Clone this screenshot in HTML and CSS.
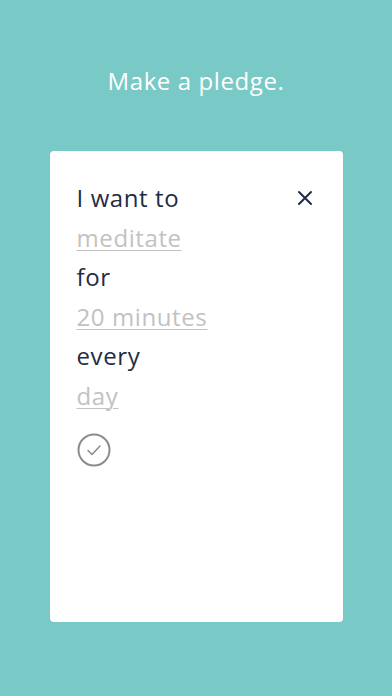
FILE: index.html
```html
<!DOCTYPE html>
<html lang="en">
<head>
    <meta charset="UTF-8">
    <meta name="viewport" content="width=device-width, initial-scale=1.0">
    <title>Make a pledge</title>
    <link rel="stylesheet" href="styles.css">
</head>
<body>
    <h1 class="title">Make a pledge.</h1>
    <div class="card">
        <div class="row">
            <span class="word">I want to</span>
            <button class="close" aria-label="Close">
                <svg width="16" height="16" viewBox="0 0 16 16"><path d="M2 2L14 14M14 2L2 14" stroke="#1f2d44" stroke-width="2" stroke-linecap="round"/></svg>
            </button>
        </div>
        <a class="pick">meditate</a>
        <span class="word">for</span>
        <a class="pick">20 minutes</a>
        <span class="word">every</span>
        <a class="pick">day</a>
        <button class="check" aria-label="Confirm">
            <svg width="34" height="34" viewBox="0 0 34 34"><circle cx="17" cy="17" r="15.5" fill="none" stroke="#8c8c8c" stroke-width="2"/><path d="M11 17.5L15 21.5L23 13" fill="none" stroke="#8c8c8c" stroke-width="1.6" stroke-linecap="round" stroke-linejoin="round"/></svg>
        </button>
    </div>
</body>
</html>
```

FILE: styles.css
```css
body {
    margin: 0;
    height: 696px;
    background-color: #79c9c7;
    font-family: "Open Sans", sans-serif;
    display: flex;
    flex-direction: column;
    align-items: center;
}
.title {
    margin: 64px 0 0;
    height: 34px;
    font-size: 24px;
    line-height: 34px;
    font-weight: 400;
    color: #ffffff;
    letter-spacing: 0.6px;
}
.card {
    margin-top: 53px;
    width: 293px;
    height: 471px;
    box-sizing: border-box;
    background-color: #ffffff;
    border-radius: 4px;
    padding: 27px 27px 0;
    display: flex;
    flex-direction: column;
    align-items: flex-start;
}
.row {
    width: 100%;
    display: flex;
    justify-content: space-between;
    align-items: center;
}
.word, .pick {
    font-size: 24px;
    line-height: 39.5px;
    letter-spacing: 0.6px;
}
.word {
    color: #1f2d44;
}
.pick {
    color: #c2c2c2;
    text-decoration: underline;
    text-decoration-thickness: 1px;
    text-underline-offset: 3px;
}
.close {
    border: none;
    background: none;
    padding: 0;
    margin-right: 3px;
    display: flex;
}
.check {
    border: none;
    background: none;
    padding: 0;
    margin-top: 18px;
    display: flex;
}
```
